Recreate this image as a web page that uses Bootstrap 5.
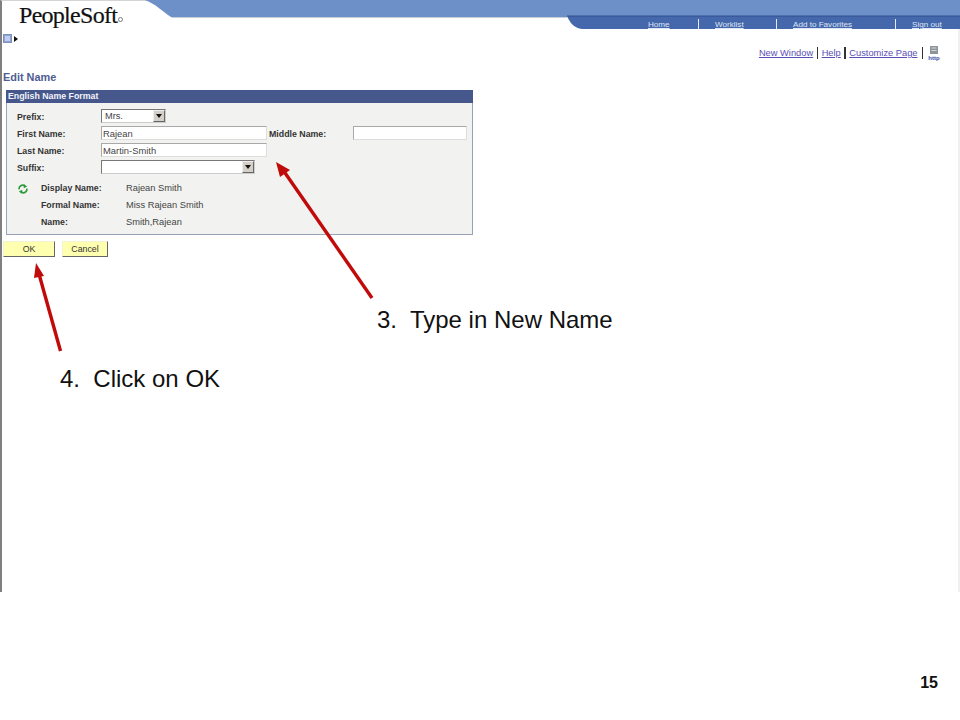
<!doctype html>
<html lang="en">
<head>
<meta charset="utf-8">
<title>Edit Name</title>
<link href="https://cdn.jsdelivr.net/npm/bootstrap@5.3.0/dist/css/bootstrap.min.css" rel="stylesheet">
<style>
html,body{margin:0;background:#fff}
body{width:960px;height:720px;position:relative;overflow:hidden;font-family:"Liberation Sans",Arial,sans-serif;color:#333}
.shot{height:592px;border-left:2px solid #7f7f7f;border-right:2px solid #f0f0f0;border-top:1px solid #d4d4d4;padding-left:1px;box-sizing:border-box}
.hdr{height:28px;margin-left:-3px;margin-right:-2px;position:relative}
.hdr-bg{position:absolute;left:0;top:-1px;width:960px;height:29px}
.logo{position:absolute;left:19px;top:1px;font-family:"Liberation Serif",serif;font-size:24px;line-height:27px;letter-spacing:-.72px;color:#111;-webkit-text-stroke:.2px #111}
.logo i{display:inline-block;width:5px;height:5px;border:1.5px solid #777;border-radius:50%;margin-left:1px;vertical-align:1px;-webkit-text-stroke:0}
.topnav{position:absolute;left:648px;top:18px;height:11px;font-size:8.1px;line-height:11px}
.tcell{height:10px;color:#dfe6f5;border-left:1px solid #e4eaf6;padding-left:16px;white-space:nowrap}
.tcell a{color:#dfe6f5;text-decoration:underline}
.tc1{width:50px;border-left:0;padding-left:0}
.tc2{width:78px}
.tc3{width:119px}
.tools{height:9px;margin-top:5px}
.mini{width:9px;height:9px;background:#8fa3d2;border:1px solid #7f91bd}
.mini::after{content:"";display:block;width:5px;height:5px;margin:1px;background:#c0cdf0}
.tri{width:0;height:0;border-left:4px solid #111;border-top:3px solid transparent;border-bottom:3px solid transparent;margin-left:2px}
.links{height:14px;margin-top:3px;margin-right:17px;font-size:9.3px;line-height:14px;color:#222}
.links a{color:#5a4fb5}
.relbar{width:1.5px;height:12px;background:#333;margin:0 3.5px}
.relbar-end{margin:0 4px}
.ttl{font-size:10.9px;font-weight:700;line-height:12px;color:#4f5d92;margin:11px 0 7px 0}
.pane{width:467px;height:145px;margin-left:3px;background:#f2f3f0;border:1px solid #98a2b6;border-top:0}
.pane-h{height:13px;background:#46578c;color:#f2f4fa;font-size:8.8px;font-weight:700;line-height:13px;padding-left:2px;margin:0 -1px}
.pane-b{padding:6px 0 0 10px;font-size:8.8px}
.frow{height:14px;margin-bottom:3px;align-items:flex-start}
.lab{width:84px;font-weight:700;color:#333;flex:none;line-height:16px}
.fld{height:14px;padding:1px 1px 0;border-radius:0;font-size:9.4px;line-height:11px;min-height:0;color:#444;background:#fff;border:1px solid #a9a9a9;border-right-color:#ddd;border-bottom-color:#ddd}
.fld-a{width:166px}.fld-b{width:114px}
.lab2{width:84px;margin-left:2px;font-weight:700;flex:none;line-height:16px}
.sel{position:relative;height:14px;flex:none}
.sel-a{width:65px}.sel-b{width:154px}
.sel select{height:14px;width:100%;padding:1px 3px 0;background:#fff none;font-size:9.2px;line-height:11px;border-radius:0;border:1px solid #777;border-right-color:#ccc;border-bottom-color:#ccc;color:#444;min-height:0}
.sel b{position:absolute;right:1px;top:1px;width:12px;height:12px;background:#d4d0c8;border:1px solid;border-color:#eee #666 #666 #eee}
.sel b::after{content:"";position:absolute;left:2px;top:3px;border-top:4px solid #111;border-left:3px solid transparent;border-right:3px solid transparent}
.ilist{margin-top:6px}
.irow{height:17px;align-items:center;line-height:17px}
.ic{width:24px;flex:none;padding-left:1px}
.ilab{width:85px;font-weight:700;flex:none}
.ival{font-size:9.3px;color:#444}
.acts{margin-top:6px;gap:7px}
.pbtn{height:16px;padding:0;border-radius:0;font-size:8.8px;line-height:14px;color:#333;background:#ffffb0;border:1px solid;border-color:#f4f4d0 #666 #666 #f4f4d0}
.pbtn:hover{background:#ffffb0;color:#333}
.w-ok{width:52px}.w-can{width:46px}
.marks{position:absolute;left:0;top:0;width:960px;height:720px;pointer-events:none}
.note{position:absolute;font-size:24px;line-height:28px;color:#111;white-space:pre}
.n3{left:377px;top:306px}
.n4{left:60px;top:365px}
.foot{height:128px;padding:81px 22px 0 0;text-align:right;font-size:16px;font-weight:700;line-height:20px;color:#111}
</style>
</head>
<body>
<div class="shot">
  <div class="hdr">
    <svg class="hdr-bg" viewBox="0 0 960 29" aria-hidden="true">
      <path d="M145 0H960V17H171C163 12 156 4 145 0Z" fill="#6d90c8"/>
      <path d="M171 17H567V18H172Z" fill="#c8ccd4"/>
      <path d="M567 16H960V29H582C574 28 570 23 567 16Z" fill="#4468ab"/>
      <path d="M567 16H960" stroke="#2f4f92"/>
    </svg>
    <div class="logo">PeopleSoft<i></i></div>
    <div class="topnav d-flex">
      <div class="tcell tc1"><a href="#">Home</a></div>
      <div class="tcell tc2"><a href="#">Worklist</a></div>
      <div class="tcell tc3"><a href="#">Add to Favorites</a></div>
      <div class="tcell"><a href="#">Sign out</a></div>
    </div>
  </div>
  <div class="tools d-flex align-items-center"><span class="mini"></span><span class="tri"></span></div>
  <div class="links d-flex justify-content-end align-items-center">
    <a href="#">New Window</a><span class="relbar"></span><a href="#">Help</a><span class="relbar"></span><a href="#">Customize Page</a><span class="relbar relbar-end"></span>
    <svg width="14" height="15" viewBox="0 0 14 15" aria-hidden="true"><rect x="3" y="0" width="8" height="8" fill="#8f9498"/><rect x="4.500" y="1.500" width="5" height="1" fill="#d5d8da"/><rect x="4.500" y="4" width="5" height="1" fill="#d5d8da"/><text x="7" y="14" text-anchor="middle" font-family="Liberation Sans" font-size="6" font-weight="700" fill="#3a4aa8">http</text></svg>
  </div>
  <div class="ttl">Edit Name</div>
  <div class="pane">
    <div class="pane-h">English Name Format</div>
    <div class="pane-b">
      <div class="frow d-flex"><span class="lab">Prefix:</span><div class="sel sel-a"><select class="form-select" aria-label="Prefix"><option>Mrs.</option></select><b></b></div></div>
      <div class="frow d-flex"><span class="lab">First Name:</span><input class="form-control fld fld-a" value="Rajean" aria-label="First Name"><span class="lab2">Middle Name:</span><input class="form-control fld fld-b" aria-label="Middle Name"></div>
      <div class="frow d-flex"><span class="lab">Last Name:</span><input class="form-control fld fld-a" value="Martin-Smith" aria-label="Last Name"></div>
      <div class="frow d-flex"><span class="lab">Suffix:</span><div class="sel sel-b"><select class="form-select" aria-label="Suffix"><option></option></select><b></b></div></div>
      <div class="ilist">
        <div class="irow d-flex"><span class="ic d-flex"><svg width="10" height="10" viewBox="0 0 12 12" fill="none" stroke="#2f9a3c" stroke-width="2" aria-hidden="true"><path d="M1.500 6.500A4 4 0 0 1 8 2.500"/><path d="M10.500 5.500A4 4 0 0 1 4 9.500"/><path d="M7 0 11 3 7 5Z" fill="#2f9a3c" stroke="none"/><path d="M5 12 1 9 5 7Z" fill="#2f9a3c" stroke="none"/></svg></span><span class="ilab">Display Name:</span><span class="ival">Rajean Smith</span></div>
        <div class="irow d-flex"><span class="ic"></span><span class="ilab">Formal Name:</span><span class="ival">Miss Rajean Smith</span></div>
        <div class="irow d-flex"><span class="ic"></span><span class="ilab">Name:</span><span class="ival">Smith,Rajean</span></div>
      </div>
    </div>
  </div>
  <div class="acts d-flex">
    <button type="button" class="btn pbtn w-ok">OK</button>
    <button type="button" class="btn pbtn w-can">Cancel</button>
  </div>
</div>
<div class="foot">15</div>
<svg class="marks" viewBox="0 0 960 720" aria-hidden="true">
  <path d="M372 298 283 170" stroke="#c10a0a" stroke-width="3.400" fill="none"/>
  <path d="M276 162 290 170 280 177Z" fill="#c10a0a"/>
  <path d="M60.500 351 39 274" stroke="#c10a0a" stroke-width="3.400" fill="none"/>
  <path d="M36 263 44 276 34 278Z" fill="#c10a0a"/>
</svg>
<div class="note n3">3.  Type in New Name</div>
<div class="note n4">4.  Click on OK</div>
<script src="https://cdn.jsdelivr.net/npm/bootstrap@5.3.0/dist/js/bootstrap.bundle.min.js"></script>
</body>
</html>
